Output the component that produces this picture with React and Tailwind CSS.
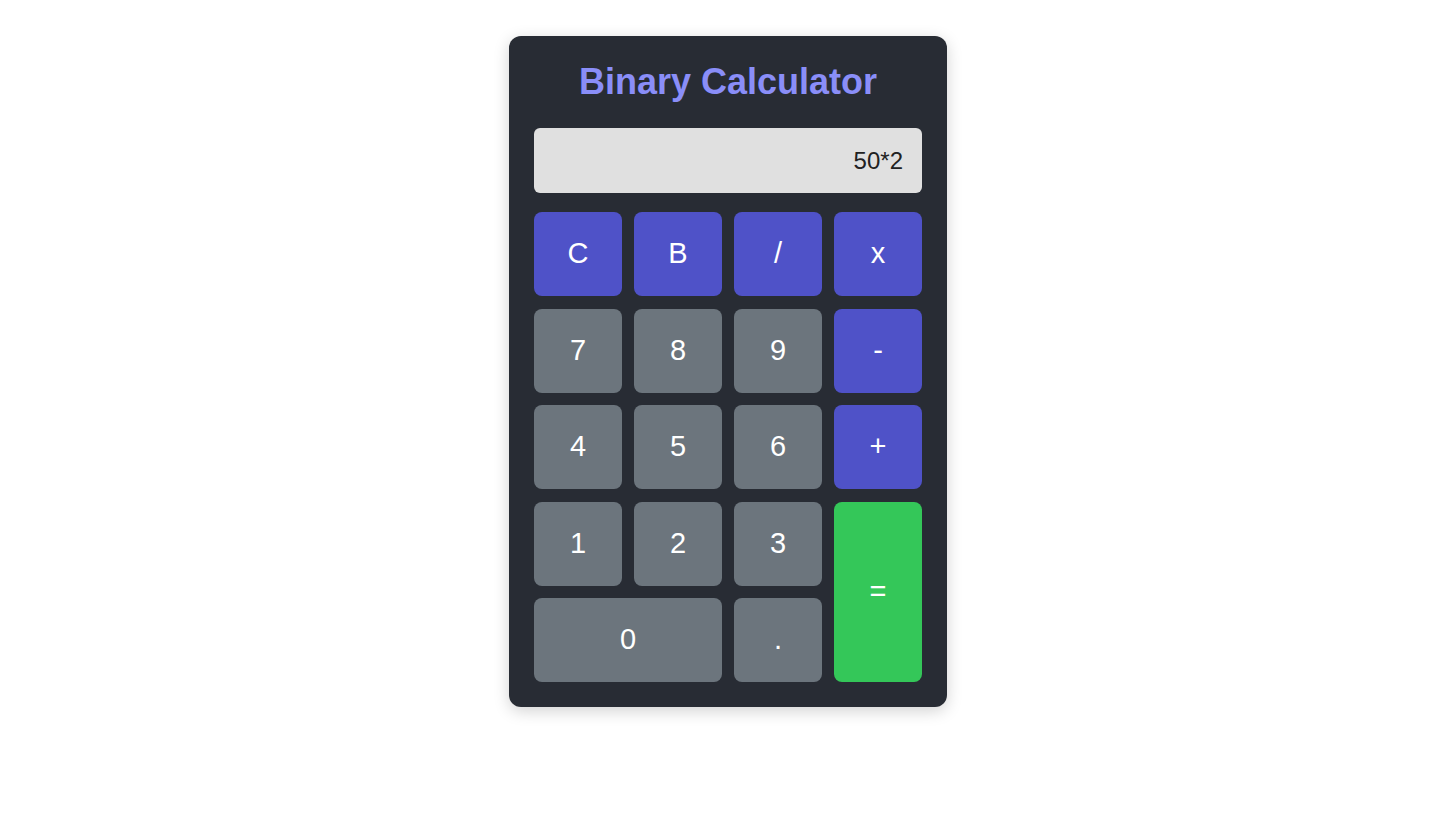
export default function App() {
  const keys = [
    { label: "C", kind: "op" },
    { label: "B", kind: "op" },
    { label: "/", kind: "op" },
    { label: "x", kind: "op" },
    { label: "7" },
    { label: "8" },
    { label: "9" },
    { label: "-", kind: "op" },
    { label: "4" },
    { label: "5" },
    { label: "6" },
    { label: "+", kind: "op" },
    { label: "1" },
    { label: "2" },
    { label: "3" },
    { label: "=", kind: "eq" },
    { label: "0", wide: true },
    { label: "." },
  ];

  return (
    <div className="min-h-screen bg-white flex justify-center pt-[36px] pl-[9px] font-['Liberation_Sans',Arial,sans-serif]">
      <div className="w-[438px] h-[671px] bg-[#282c34] rounded-xl shadow-[0_4px_16px_rgba(0,0,0,0.18)] px-[25px] pt-[25px]">
        <h1 className="text-[36px] leading-[41px] font-bold text-center text-[#8a8ef8]">
          Binary Calculator
        </h1>
        <div className="mt-[26px] h-[65px] bg-[#e0e0e0] rounded-md flex items-center justify-end pr-[19px] text-[24px] text-[#222]">
          50*2
        </div>
        <div className="mt-[19px] grid grid-cols-4 grid-rows-[repeat(5,84px)] gap-x-3 gap-y-[12.5px]">
          {keys.map((k) => (
            <button
              key={k.label}
              className={
                "rounded-lg text-white text-[29px] flex items-center justify-center " +
                (k.kind === "op"
                  ? "bg-[#4f52c8]"
                  : k.kind === "eq"
                  ? "bg-[#34c759] row-span-2"
                  : "bg-[#6c757d]") +
                (k.wide ? " col-span-2" : "")
              }
            >
              {k.label}
            </button>
          ))}
        </div>
      </div>
    </div>
  );
}
